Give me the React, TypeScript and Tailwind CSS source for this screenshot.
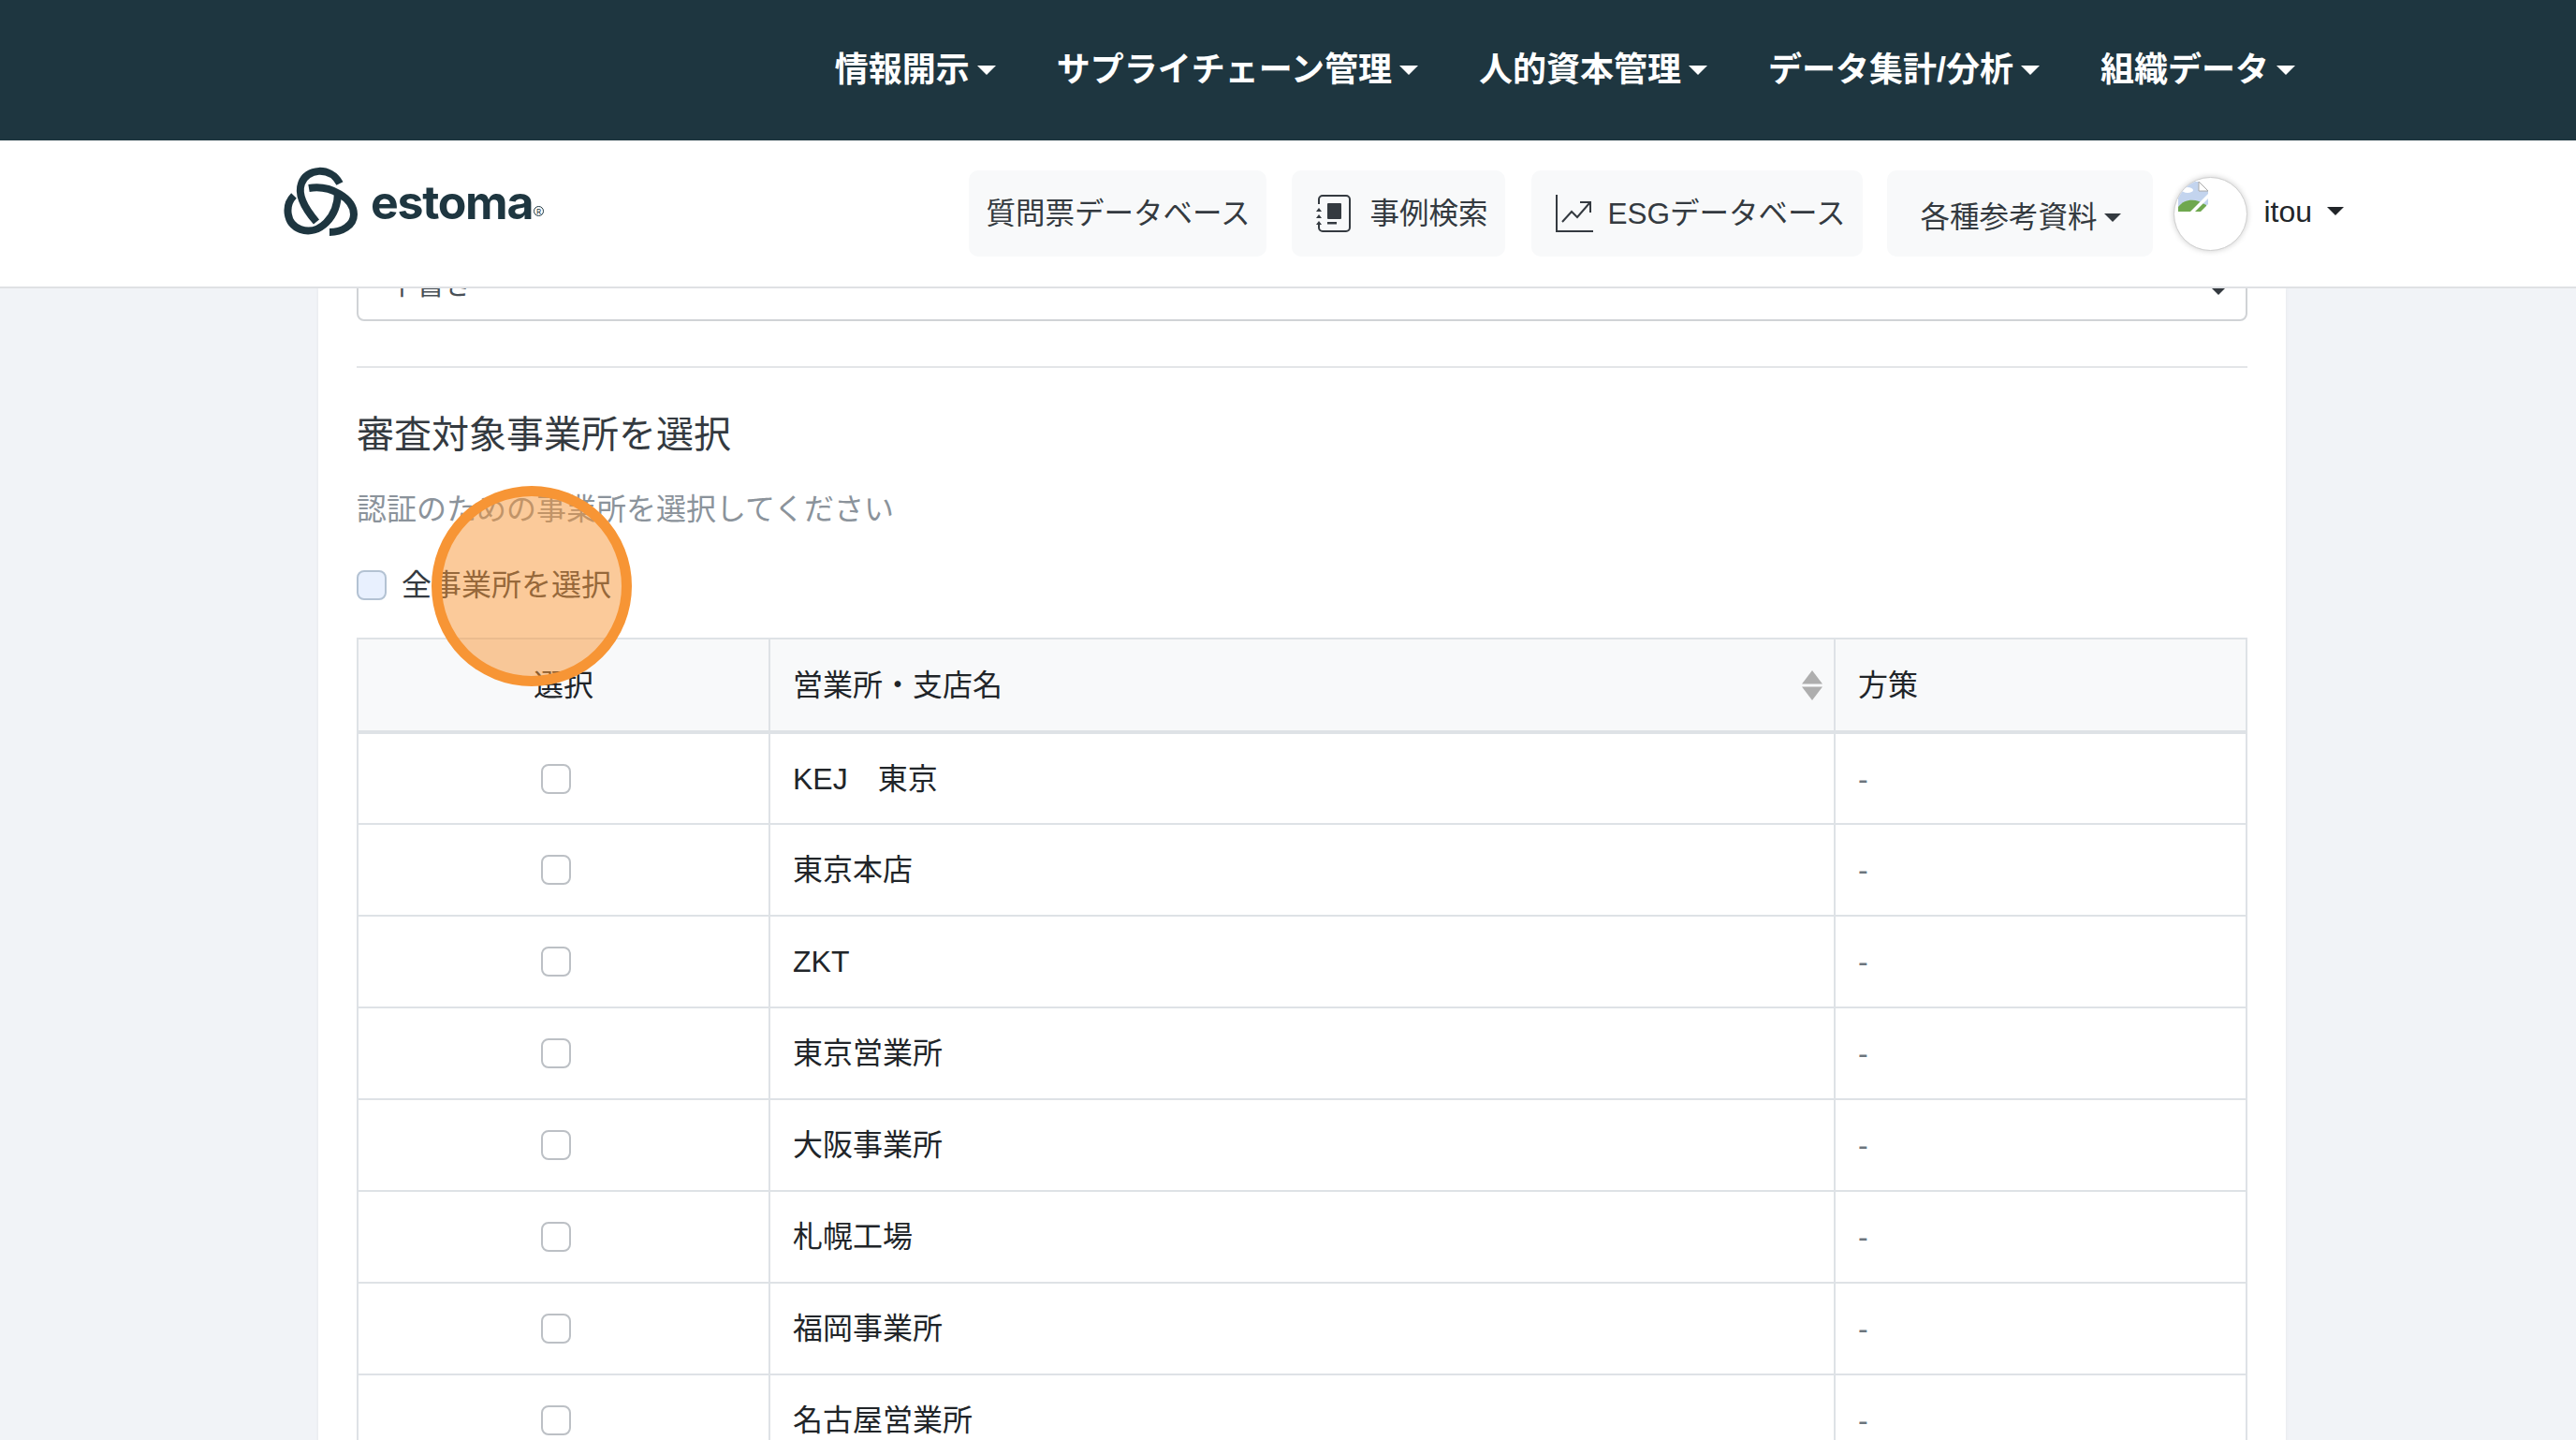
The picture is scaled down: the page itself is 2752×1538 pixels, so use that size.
import React from "react";

const font = "font-['Liberation_Sans','Noto_Sans_CJK_JP',sans-serif]";

const nav = ["情報開示", "サプライチェーン管理", "人的資本管理", "データ集計/分析", "組織データ"];
const rows = ["KEJ　東京", "東京本店", "ZKT", "東京営業所", "大阪事業所", "札幌工場", "福岡事業所", "名古屋営業所"];

function Caret({ className }: { className: string }) {
  return <span className={"inline-block w-0 h-0 border-x-[9px] border-x-transparent border-t-[9px] " + className} />;
}

function Logo() {
  return (
    <svg width="79" height="75" viewBox="0 0 79 75" fill="none" stroke="#1e3640" strokeWidth="8">
      <path d="M35 60C22 45 15 30 19 19C24 3 50 0 60 19" />
      <path d="M27 24C50 20 75 35 75 52C75 64 62 71 49 71" />
      <path d="M11 32C1 42 2 62 18 68C38 75 58 55 58 28" />
    </svg>
  );
}

function NotebookIcon() {
  return (
    <svg width="38" height="40" viewBox="0 0 38 40" fill="none" className="shrink-0">
      <path d="M3 10V5a4 4 0 0 1 4-4h25a4 4 0 0 1 4 4v30a4 4 0 0 1-4 4H7a4 4 0 0 1-4-4v-4" stroke="#343a40" strokeWidth="2" />
      <rect x="12" y="9" width="15" height="17" rx="1" fill="#343a40" />
      <rect x="12" y="29" width="10" height="2.5" fill="#343a40" />
      <path d="M3 14l3 4H0zM3 21l3 4H0zM3 28l3 4H0z" fill="#343a40" />
    </svg>
  );
}

function ChartIcon() {
  return (
    <svg width="40" height="40" viewBox="0 0 40 40" fill="none" stroke="#343a40" strokeWidth="2" className="shrink-0">
      <path d="M1 0V39H40" />
      <path d="M7 29L17 18L23 24L36 9" />
      <path d="M26 8H37V19" />
    </svg>
  );
}

function BrokenImage() {
  return (
    <svg width="32" height="32" viewBox="0 0 32 32" className="absolute left-[4px] top-[4px]">
      <path d="M0 0H22L32 10V32H0Z" fill="#c3d4ee" />
      <path d="M0 32V27C5 20 14 18 22 21L30 25V32Z" fill="#6fa84f" />
      <ellipse cx="10" cy="9" rx="6" ry="3" fill="#fff" />
      <path d="M22 0L32 10H22Z" fill="#fff" stroke="#a8a8a8" strokeWidth="1" />
      <path d="M32 13L13 32H18L32 18Z" fill="#fff" />
      <path d="M32 24V32H24Z" fill="#fff" />
    </svg>
  );
}

function Btn({ children, className }: { children: React.ReactNode; className?: string }) {
  return (
    <div className={"h-[92px] bg-[#f8f9fa] rounded-[10px] flex items-center text-[31.5px] leading-[40px] text-[#343a40] " + (className ?? "")}>
      {children}
    </div>
  );
}

export default function App() {
  return (
    <div className={"w-[2752px] h-[1538px] overflow-hidden bg-[#f1f3f7] " + font}>
      <header className="relative z-10">
        <div className="h-[150px] bg-[#1e3640] flex items-center justify-end gap-[65px] pr-[300px] pb-[1px]">
          {nav.map((n) => (
            <div key={n} className="flex items-center gap-[8px] text-white text-[36px] leading-[48px] font-bold">
              <span>{n}</span>
              <Caret className="border-x-[10px] border-t-[10px] border-t-white" />
            </div>
          ))}
        </div>
        <div className="h-[158px] bg-white border-b-2 border-[#dfe1e4] flex items-center pl-[303px] pr-[248px]">
          <div className="flex items-center gap-[14px] -mt-[28px]">
            <Logo />
            <div className="flex items-start pt-[4px]">
              <span className="text-[50px] leading-[56px] font-bold font-['Inter',sans-serif] text-[#1e3640] tracking-[-1.3px]">estoma</span>
              <span className="text-[#1e3640] mt-[32px] ml-[1px] border border-[#1e3640] rounded-full w-[11px] h-[11px] flex items-center justify-center font-['Inter',sans-serif]">
                <span className="text-[8px] leading-[8px]">R</span>
              </span>
            </div>
          </div>
          <div className="ml-auto flex items-center">
            <Btn className="px-[18px]">質問票データベース</Btn>
            <Btn className="ml-[27px] pl-[26px] pr-[19px] gap-[19px]">
              <NotebookIcon />
              <span>事例検索</span>
            </Btn>
            <Btn className="ml-[28px] pl-[26px] pr-[19px] gap-[15px]">
              <ChartIcon />
              <span>ESGデータベース</span>
            </Btn>
            <Btn className="ml-[26px] pl-[35px] pr-[34px] gap-[8px]">
              <span className="mt-[8px]">各種参考資料</span>
              <Caret className="border-t-[#343a40] mt-[8px]" />
            </Btn>
            <div className="ml-[22px] relative w-[79px] h-[79px] rounded-full bg-white overflow-hidden border border-[#cfcfcf] shadow-[0_0_6px_rgba(0,0,0,0.2)]">
              <BrokenImage />
            </div>
            <span className="ml-[17px] text-[32px] leading-[40px] text-[#212529] -mt-[4px]">itou</span>
            <Caret className="ml-[16px] border-t-[#212529] -mt-[6px]" />
          </div>
        </div>
      </header>

      <main className="flex justify-center pl-[30px]">
        <div className="relative w-[2102px] bg-white px-[41px] shadow-[0_0_4px_rgba(0,0,0,0.06)]">
          <div className="-mt-[45px] h-[80px] border-2 border-[#d0d3d6] rounded-[8px] flex items-center justify-between pl-[32px] pr-[20px] text-[30px] text-[#495057]">
            <span>下書き</span>
            <Caret className="border-t-[#343a40] border-x-[7px] mt-[14px]" />
          </div>

          <div className="mt-[48px] h-[2px] bg-[#e3e5e8]" />

          <h2 className="mt-[47px] text-[40px] leading-[48px] text-[#343a40] font-normal">審査対象事業所を選択</h2>
          <p className="mt-[36px] text-[32px] leading-[40px] text-[#8b939b]">認証のための事業所を選択してください</p>

          <label className="mt-[41px] flex items-center gap-[16px] h-[40px] text-[32px] leading-[40px] text-[#343a40]">
            <span className="w-[32px] h-[32px] rounded-[8px] bg-[#e8f0fe] border-2 border-[#b3c2d3]" />
            <span>全事業所を選択</span>
          </label>

          <table className="mt-[36px] w-full table-fixed border-collapse text-[32px] leading-[40px] text-[#212529]">
            <colgroup>
              <col className="w-[440px]" />
              <col className="w-[1138px]" />
              <col />
            </colgroup>
            <thead>
              <tr className="h-[100px] bg-[#f8f9fa]">
                <th className="border-2 border-[#dee2e6] border-b-4 font-normal text-center">選択</th>
                <th className="border-2 border-[#dee2e6] border-b-4 font-normal text-left px-[24px]">
                  <div className="flex items-center justify-between">
                    <span>営業所・支店名</span>
                    <svg width="22" height="32" viewBox="0 0 22 32" className="-mr-[12px]" fill="#aeaeae">
                      <path d="M11 0L22 14.5H0Z" />
                      <path d="M11 32L22 17.5H0Z" />
                    </svg>
                  </div>
                </th>
                <th className="border-2 border-[#dee2e6] border-b-4 font-normal text-left px-[24px]">方策</th>
              </tr>
            </thead>
            <tbody>
              {rows.map((r) => (
                <tr key={r} className="h-[98px]">
                  <td className="border-2 border-[#dee2e6]">
                    <div className="flex justify-center pr-[16px]">
                      <span className="w-[32px] h-[32px] rounded-[8px] bg-white border-2 border-[#bcc0c5]" />
                    </div>
                  </td>
                  <td className="border-2 border-[#dee2e6] px-[24px]">{r}</td>
                  <td className="border-2 border-[#dee2e6] px-[24px] text-[#6c757d]">-</td>
                </tr>
              ))}
            </tbody>
          </table>

          <div className="absolute left-[121px] top-[211px] w-[214px] h-[214px] rounded-full border-[11px] border-[#f79535] bg-[#f79535]/50" />
        </div>
      </main>
    </div>
  );
}
